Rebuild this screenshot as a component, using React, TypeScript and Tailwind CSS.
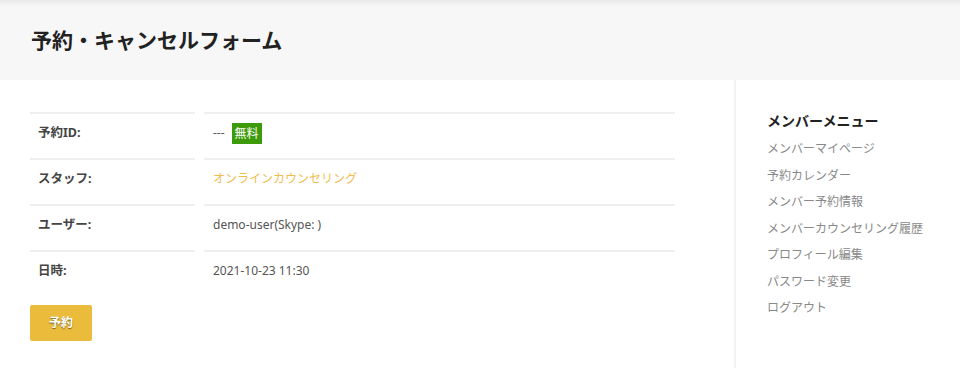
import React from "react";

const font = { fontFamily: '"Noto Sans", "Noto Sans CJK JP", sans-serif' };

function Row({ label, children }: { label: string; children: React.ReactNode }) {
  return (
    <>
      <div className="border-t-2 border-[#efefef] h-[46px] flex items-center pl-[8px] pb-[6px] text-[12.5px] font-bold text-[#444]">
        {label}
      </div>
      <div className="border-t-2 border-[#efefef] h-[46px] flex items-center pl-[9px] pb-[6px] text-[12px] text-[#555]">
        {children}
      </div>
    </>
  );
}

export default function App() {
  const menu = [
    "メンバーマイページ",
    "予約カレンダー",
    "メンバー予約情報",
    "メンバーカウンセリング履歴",
    "プロフィール編集",
    "パスワード変更",
    "ログアウト",
  ];
  return (
    <div className="w-[960px] h-[368px] bg-white overflow-hidden" style={font}>
      <header className="h-[80px] bg-gradient-to-b from-[#e9e9e9] via-[#f7f7f7] via-[8%] to-[#f7f7f7] flex items-center pl-[31px] pt-[1px]">
        <h1 className="text-[21px] font-bold text-[#222]">予約・キャンセルフォーム</h1>
      </header>
      <div className="flex">
        <main className="w-[645px] ml-[30px] pt-[32px]">
          <div className="grid grid-cols-[165px_1fr] gap-x-[9px]">
            <Row label="予約ID:">
              <span className="mr-[7px]">---</span>
              <span className="bg-[#3d9a0b] text-white px-[3px] text-[12px] leading-[21px]">無料</span>
            </Row>
            <Row label="スタッフ:">
              <span className="text-[#f0bd4f]">オンラインカウンセリング</span>
            </Row>
            <Row label="ユーザー:">demo-user(Skype: )</Row>
            <Row label="日時:">2021-10-23 11:30</Row>
          </div>
          <button className="mt-[9px] w-[62px] h-[36px] bg-[#ebbb3b] rounded-[2px] text-white text-[12px] font-bold [text-shadow:0_1px_1px_rgba(0,0,0,0.5)]">
            予約
          </button>
        </main>
        <aside className="ml-[59px] border-l-2 border-[#f3f3f3] h-[288px] pl-[31px] pt-[30px] flex-1">
          <h2 className="text-[14px] font-bold text-[#222] leading-[22px]">メンバーメニュー</h2>
          <ul className="mt-[4px]">
            {menu.map((m) => (
              <li key={m} className="text-[12px] text-[#888] leading-[26.5px]">
                {m}
              </li>
            ))}
          </ul>
        </aside>
      </div>
    </div>
  );
}
